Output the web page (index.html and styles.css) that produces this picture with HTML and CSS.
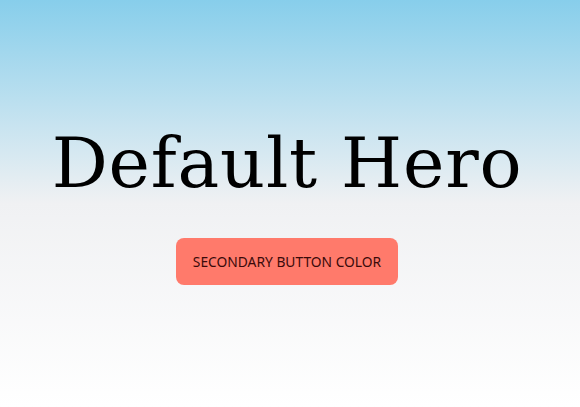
FILE: index.html
```html
<!DOCTYPE html>
<html>
<head>
<meta charset="utf-8">
<link rel="stylesheet" href="styles.css">
</head>
<body>
<section class="hero">
  <h1 class="hero-title">Default Hero</h1>
  <button class="hero-button">SECONDARY BUTTON COLOR</button>
</section>
</body>
</html>
```
FILE: styles.css
```css
html, body {
  margin: 0;
  padding: 0;
}
.hero {
  box-sizing: border-box;
  height: 407px;
  padding: 0 6px 2px 0;
  display: flex;
  flex-direction: column;
  align-items: center;
  justify-content: center;
  background: linear-gradient(180deg, #87ceeb 0%, #f0f1f3 50%, #ffffff 100%);
}
.hero-title {
  margin: 0;
  font-family: "DejaVu Serif", serif;
  font-weight: normal;
  font-size: 70px;
  letter-spacing: 0.8px;
  line-height: 1.2;
  color: #000;
}
.hero-button {
  margin-top: 33px;
  width: 222px;
  height: 47px;
  border: none;
  border-radius: 8px;
  background: #ff7a6b;
  color: #3a0a0a;
  font-family: "Noto Sans", sans-serif;
  font-size: 13.8px;
}
```
